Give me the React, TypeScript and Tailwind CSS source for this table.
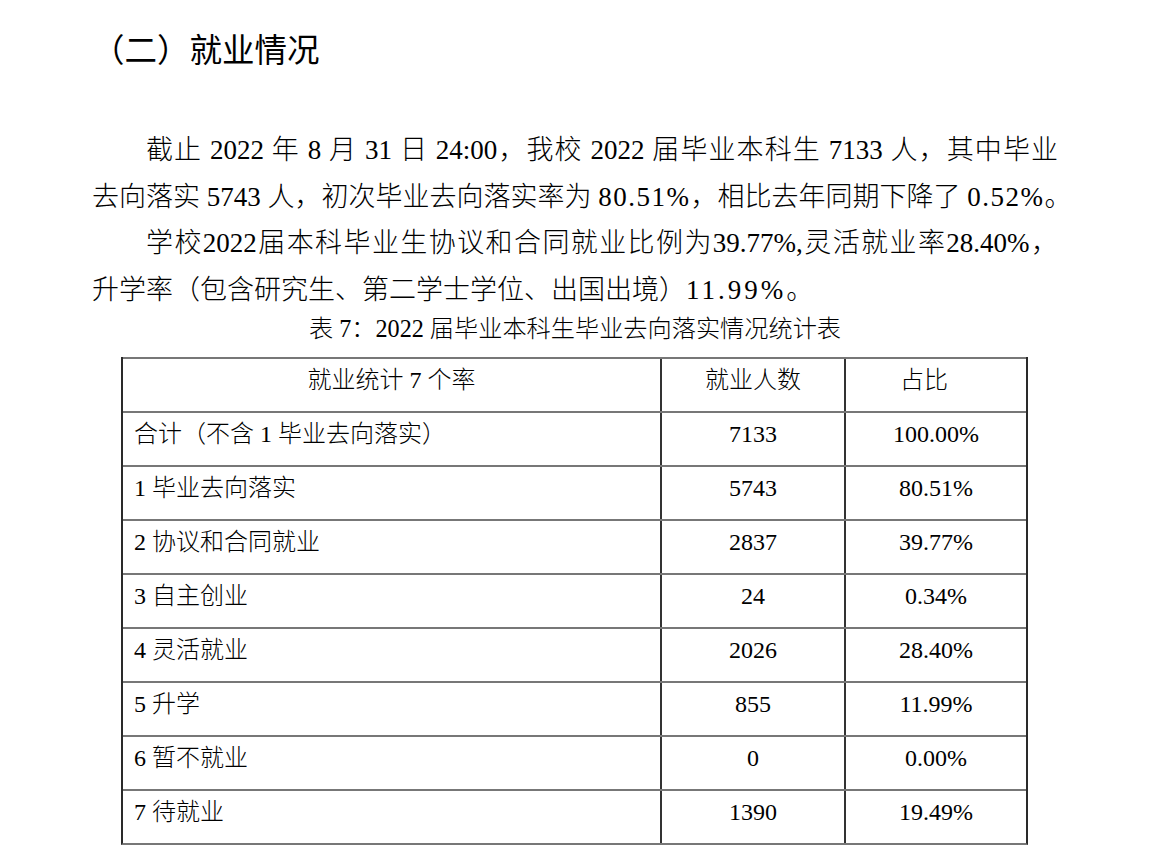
const ROWS = [
  { label: "合计（不含 1 毕业去向落实）", count: "7133", ratio: "100.00%" },
  { label: "1 毕业去向落实", count: "5743", ratio: "80.51%" },
  { label: "2 协议和合同就业", count: "2837", ratio: "39.77%" },
  { label: "3 自主创业", count: "24", ratio: "0.34%" },
  { label: "4 灵活就业", count: "2026", ratio: "28.40%" },
  { label: "5 升学", count: "855", ratio: "11.99%" },
  { label: "6 暂不就业", count: "0", ratio: "0.00%" },
  { label: "7 待就业", count: "1390", ratio: "19.49%" },
];

export default function App() {
  return (
    <div className="h-[868px] w-[1154px] overflow-hidden bg-white pl-[92px] pt-[28px] font-['Liberation_Serif','Noto_Sans_CJK_SC',serif] font-light text-black">
      <h1 className="font-['Noto_Sans_CJK_SC',sans-serif] text-[32.5px] font-normal leading-[40px]">
        （二）就业情况
      </h1>

      {/* 正文 */}
      <div className="mt-[59px] w-[966px] text-[27px] leading-[46.7px]">
        <div className="whitespace-nowrap indent-[2em] text-justify [text-align-last:justify]">
          截止 2022 年 8 月 31 日 24:00，我校 2022 届毕业本科生 7133 人，其中毕业
        </div>
        <div className="whitespace-nowrap">
          去向落实 5743 人，初次毕业去向落实率为 <span className="tracking-[1.5px]">80.51%</span>，相比去年同期下降了{" "}
          <span className="tracking-[1.5px]">0.52%</span>。
        </div>
        <div className="whitespace-nowrap indent-[2em] text-justify [text-align-last:justify]">
          学校2022届本科毕业生协议和合同就业比例为39.77%,灵活就业率28.40%，
        </div>
        <div className="whitespace-nowrap">
          升学率（包含研究生、第二学士学位、出国出境）<span className="tracking-[3px]">11.99%</span>。
        </div>
      </div>

      <p className="mt-[1px] w-[966px] text-center text-[24.2px] leading-[28px]">
        表 7：2022 届毕业本科生毕业去向落实情况统计表
      </p>

      {/* 表格 */}
      <div className="ml-[29px] mt-[14px] w-[907px] border-b-2 border-x-2 border-b-[#777] border-x-[#2a2a2a] text-[24px] leading-[30px]">
        <div className="grid h-[54px] grid-cols-[537px_184px_182px] border-t-2 border-[#777]">
          <div className="pt-[6px] text-center">就业统计 7 个率</div>
          <div className="border-l-2 border-[#333] pt-[6px] text-center">就业人数</div>
          <div className="border-l-2 border-[#333] pr-[24px] pt-[6px] text-center">占比</div>
        </div>
        {ROWS.map((r) => (
          <div
            key={r.label}
            className="grid h-[54px] grid-cols-[537px_184px_182px] border-t-2 border-[#777]"
          >
            <div className="pl-[11px] pt-[6px]">{r.label}</div>
            <div className="border-l-2 border-[#333] pt-[6px] text-center">{r.count}</div>
            <div className="border-l-2 border-[#333] pt-[6px] text-center">{r.ratio}</div>
          </div>
        ))}
      </div>
    </div>
  );
}
